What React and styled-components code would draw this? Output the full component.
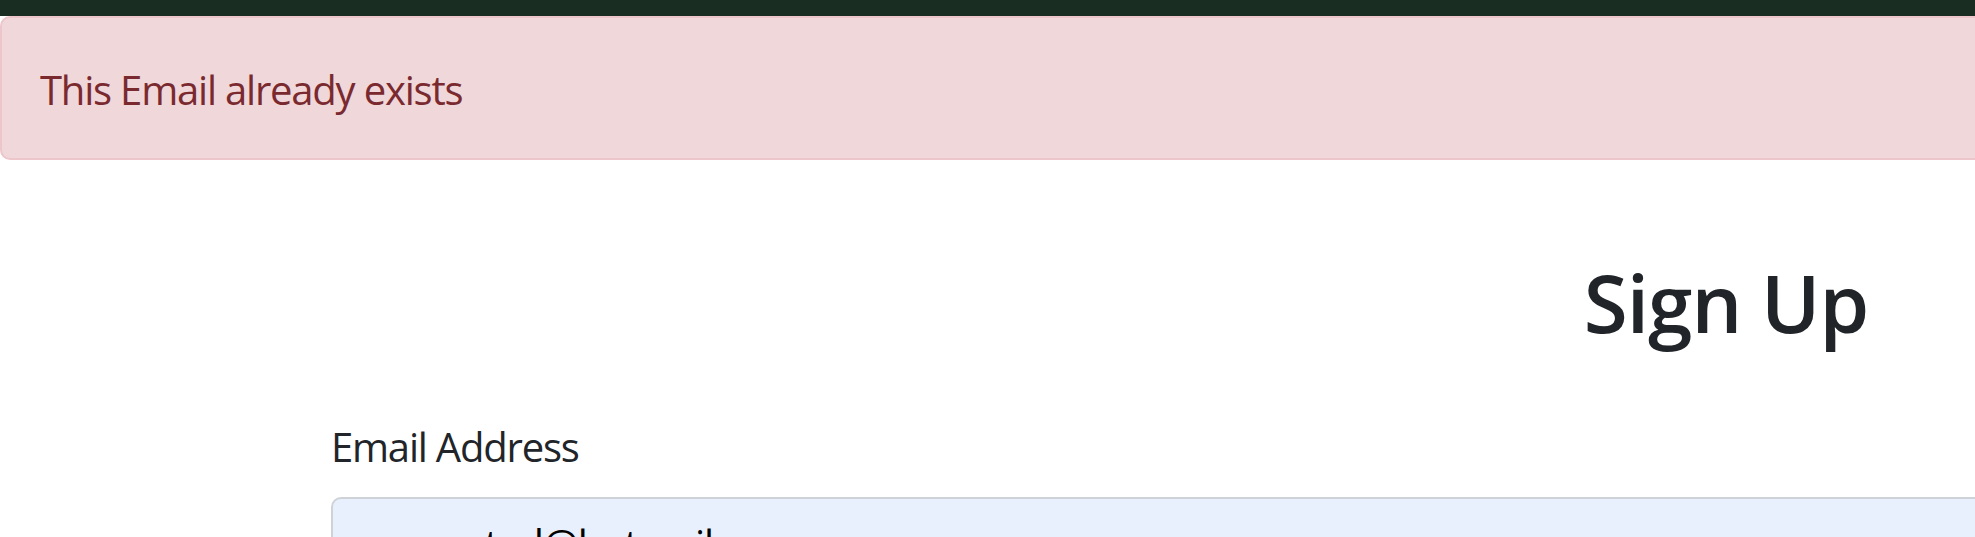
import React from 'react';
import styled, { createGlobalStyle } from 'styled-components';

const GlobalStyle = createGlobalStyle`
    html, body {
        margin: 0;
        padding: 0;
        overflow: hidden;
        background: #ffffff;
    }
    body {
        font-family: "Open Sans", "Noto Sans", sans-serif;
        color: #212529;
    }
`;

const TopBar = styled.div`
    height: 16px;
    background: #1a2d22;
`;

const AlertWrap = styled.div`
    overflow: hidden;
`;

const Alert = styled.div`
    margin-right: -20px;
    padding: 42px 38px 38px;
    background: #efd7da;
    border: 2px solid #ecc6cb;
    border-radius: 10px;
    color: #7a2a2f;
    font-size: 40px;
    line-height: 60px;
    letter-spacing: -1.2px;
`;

const Container = styled.div`
    margin-left: 331px;
    width: 2790px;
`;

const Title = styled.h1`
    margin: 94px 0 67px;
    text-align: center;
    font-size: 80px;
    line-height: 96px;
    font-weight: 600;
    color: #212529;
    letter-spacing: -1px;
`;

const Field = styled.div`
    display: flex;
    flex-direction: column;
`;

const Label = styled.label`
    margin-bottom: 20px;
    font-size: 40px;
    line-height: 60px;
    letter-spacing: -1.2px;
`;

const Input = styled.input`
    box-sizing: border-box;
    width: 100%;
    padding: 15px 30px;
    background: #e8f0fe;
    border: 2px solid #cfd3d8;
    border-radius: 10px;
    font-family: inherit;
    font-size: 40px;
    line-height: 60px;
    color: #000000;
    letter-spacing: -1px;
    outline: none;
`;

const App = () => {
    return (
        <>
            <GlobalStyle />
            <TopBar />
            <AlertWrap>
                <Alert role="alert">This Email already exists</Alert>
            </AlertWrap>
            <Container>
                <Title>Sign Up</Title>
                <Field>
                    <Label htmlFor="email">Email Address</Label>
                    <Input id="email" type="email" defaultValue="unwanted@hotmail.com" readOnly />
                </Field>
            </Container>
        </>
    );
};

export default App;
